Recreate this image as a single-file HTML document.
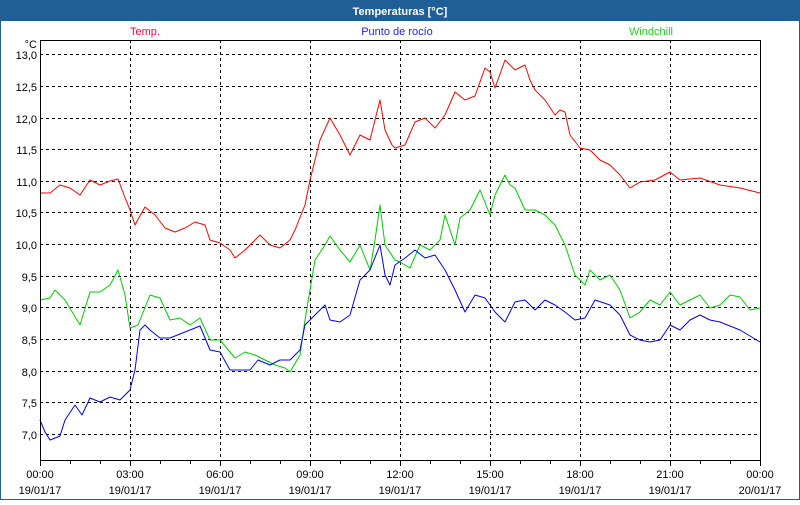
<!DOCTYPE html>
<html><head><style>
body{margin:0;width:800px;height:500px;overflow:hidden;background:#fff;font-family:"Liberation Sans",sans-serif;}
</style></head><body>
<svg width="800" height="500" xmlns="http://www.w3.org/2000/svg" font-family="Liberation Sans, sans-serif" font-size="11">
<rect x="0" y="0" width="800" height="500" fill="#fff"/>
<rect x="0.5" y="0.5" width="799" height="499" fill="none" stroke="#1f5f96"/>
<rect x="0" y="0" width="800" height="21" fill="#1f5f96"/>
<text x="400" y="15" text-anchor="middle" fill="#fff" font-weight="bold" font-size="11">Temperaturas [°C]</text>
<text x="145" y="35" text-anchor="middle" fill="#ff0040">Temp.</text>
<text x="397" y="35" text-anchor="middle" fill="#2020ff">Punto de rocío</text>
<text x="651" y="35" text-anchor="middle" fill="#20d020">Windchill</text>
<g stroke="#000" stroke-width="1" stroke-dasharray="3,3" shape-rendering="crispEdges">
<line x1="40" x2="760" y1="54.5" y2="54.5"/><line x1="40" x2="760" y1="86.5" y2="86.5"/><line x1="40" x2="760" y1="118.5" y2="118.5"/><line x1="40" x2="760" y1="149.5" y2="149.5"/><line x1="40" x2="760" y1="181.5" y2="181.5"/><line x1="40" x2="760" y1="212.5" y2="212.5"/><line x1="40" x2="760" y1="244.5" y2="244.5"/><line x1="40" x2="760" y1="276.5" y2="276.5"/><line x1="40" x2="760" y1="307.5" y2="307.5"/><line x1="40" x2="760" y1="339.5" y2="339.5"/><line x1="40" x2="760" y1="371.5" y2="371.5"/><line x1="40" x2="760" y1="402.5" y2="402.5"/><line x1="40" x2="760" y1="434.5" y2="434.5"/>
<line y1="40" y2="460" x1="130.5" x2="130.5"/><line y1="40" y2="460" x1="220.5" x2="220.5"/><line y1="40" y2="460" x1="310.5" x2="310.5"/><line y1="40" y2="460" x1="400.5" x2="400.5"/><line y1="40" y2="460" x1="490.5" x2="490.5"/><line y1="40" y2="460" x1="580.5" x2="580.5"/><line y1="40" y2="460" x1="670.5" x2="670.5"/>
</g>
<g fill="none" stroke-width="1" stroke-linejoin="round">
<polyline stroke="#ff0000" points="40,193 50,193 60,185 70,188 80,195 90,180 100,185 110,181 118,179 124,195 130,210 135,225 145,207 155,215 165,228 175,232 185,228 195,222 205,225 210,240 220,243 230,250 235,258 245,250 255,240 260,235 270,245 280,248 290,240 295,230 305,205 310,180 320,140 330,118 340,135 350,155 360,135 370,140 380,100 385,130 392,145 395,148 405,145 415,122 425,118 435,128 445,115 455,92 465,100 475,96 485,68 490,72 495,88 505,60 515,70 525,65 530,80 535,90 545,100 555,115 560,110 565,112 570,135 580,148 590,150 600,160 610,165 620,175 630,188 640,182 655,180 670,172 680,180 700,178 720,185 740,188 760,193"/>
<polyline stroke="#00cc00" points="40,300 50,298 55,290 65,300 80,325 90,292 100,292 110,285 118,270 125,295 130,328 138,325 150,295 160,298 170,320 180,318 190,325 200,318 210,340 220,340 235,358 245,352 255,355 265,360 275,365 285,368 290,372 300,355 305,320 315,260 325,245 330,236 340,250 350,262 360,245 370,270 375,240 380,205 385,245 395,260 400,262 410,268 420,245 430,250 440,240 445,215 455,245 460,218 470,210 480,190 490,215 495,195 505,175 510,185 515,188 525,210 535,210 545,215 555,225 565,245 575,275 585,285 590,270 600,280 610,275 620,290 630,318 640,312 650,300 660,305 670,292 680,305 690,300 700,295 710,308 720,305 730,295 740,297 750,310 760,308"/>
<polyline stroke="#0000ee" points="40,420 45,432 50,440 60,436 65,420 75,405 82,415 90,398 100,402 110,397 120,400 130,390 135,370 140,330 145,325 150,330 160,338 170,338 180,334 190,330 200,326 210,350 220,352 230,370 250,370 258,360 270,365 280,360 290,360 300,350 305,325 315,315 325,305 330,320 340,322 350,315 360,280 370,270 380,245 385,275 390,285 395,265 405,258 415,250 425,258 435,255 445,270 455,290 465,312 475,295 485,298 495,312 505,322 515,302 525,300 535,310 545,300 555,305 565,312 575,320 585,318 595,300 610,305 620,315 630,335 640,340 650,342 660,340 670,325 680,330 690,320 700,315 710,320 720,322 740,330 760,342"/>
</g>
<rect x="40.5" y="40.5" width="720" height="420" fill="none" stroke="#000" shape-rendering="crispEdges"/>
<g stroke="#000" shape-rendering="crispEdges">
<path d="M40.5 460V466M70.5 460V464M100.5 460V464M130.5 460V466M160.5 460V464M190.5 460V464M220.5 460V466M250.5 460V464M280.5 460V464M310.5 460V466M340.5 460V464M370.5 460V464M400.5 460V466M430.5 460V464M460.5 460V464M490.5 460V466M520.5 460V464M550.5 460V464M580.5 460V466M610.5 460V464M640.5 460V464M670.5 460V466M700.5 460V464M730.5 460V464M760.5 460V466"/>
</g>
<g text-anchor="end" fill="#000">
<text x="37" y="48">°C</text>
<text x="37" y="59">13,0</text><text x="37" y="91">12,5</text><text x="37" y="123">12,0</text><text x="37" y="154">11,5</text><text x="37" y="186">11,0</text><text x="37" y="217">10,5</text><text x="37" y="249">10,0</text><text x="37" y="281">9,5</text><text x="37" y="312">9,0</text><text x="37" y="344">8,5</text><text x="37" y="376">8,0</text><text x="37" y="407">7,5</text><text x="37" y="439">7,0</text>
</g>
<g text-anchor="middle" fill="#000">
<text x="40" y="478">00:00</text><text x="40" y="494">19/01/17</text>
<text x="130" y="478">03:00</text><text x="130" y="494">19/01/17</text>
<text x="220" y="478">06:00</text><text x="220" y="494">19/01/17</text>
<text x="310" y="478">09:00</text><text x="310" y="494">19/01/17</text>
<text x="400" y="478">12:00</text><text x="400" y="494">19/01/17</text>
<text x="490" y="478">15:00</text><text x="490" y="494">19/01/17</text>
<text x="580" y="478">18:00</text><text x="580" y="494">19/01/17</text>
<text x="670" y="478">21:00</text><text x="670" y="494">19/01/17</text>
<text x="760" y="478">00:00</text><text x="760" y="494">20/01/17</text>
</g>
</svg>
</body></html>
